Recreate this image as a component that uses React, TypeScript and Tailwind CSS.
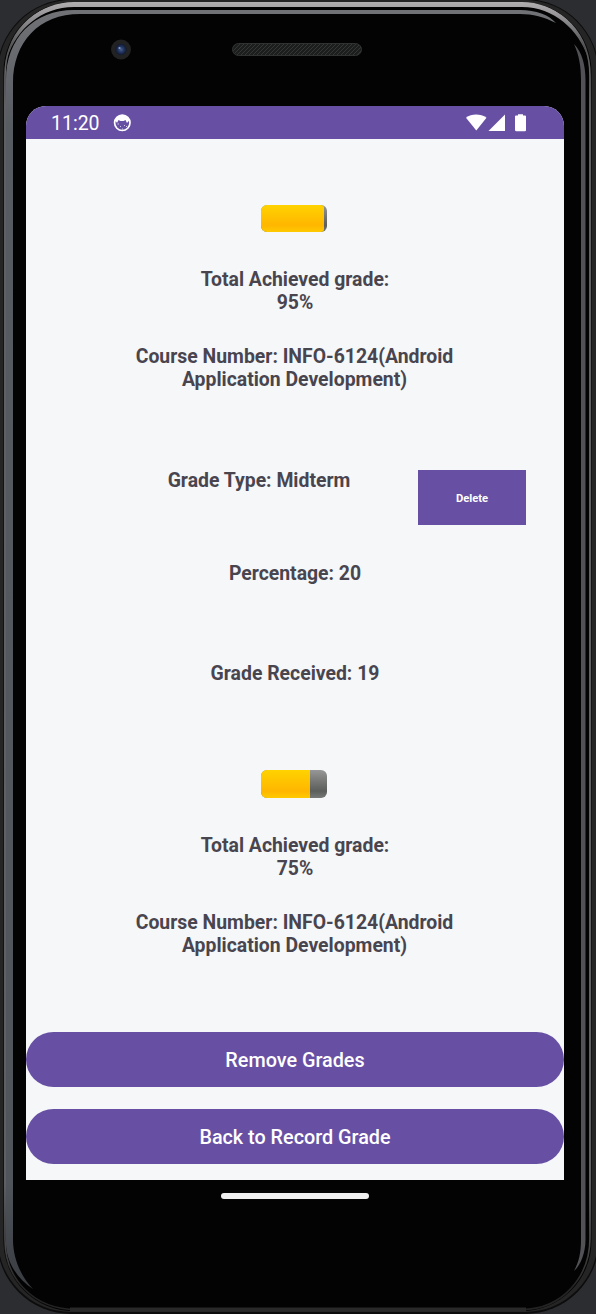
import React from "react";

function PhoneFrame() {
  return (
    <svg className="absolute inset-0 -z-10" width="596" height="1314" viewBox="0 0 596 1314" fill="none">
      <defs>
        <linearGradient id="rim" x1="0" y1="0" x2="0" y2="1314" gradientUnits="userSpaceOnUse">
          <stop offset="0" stopColor="#b5b2b4" />
          <stop offset="0.01" stopColor="#9b999b" />
          <stop offset="0.035" stopColor="#555557" />
          <stop offset="0.08" stopColor="#777779" />
          <stop offset="0.9" stopColor="#77777a" />
          <stop offset="0.95" stopColor="#444445" />
          <stop offset="0.98" stopColor="#242424" />
        </linearGradient>
        <linearGradient id="slate" x1="0" y1="0" x2="0" y2="1314" gradientUnits="userSpaceOnUse">
          <stop offset="0" stopColor="#737478" />
          <stop offset="0.1" stopColor="#575b62" />
          <stop offset="0.9" stopColor="#50555c" />
          <stop offset="1" stopColor="#33363a" />
        </linearGradient>
        <radialGradient id="lens">
          <stop offset="0" stopColor="#4a6090" />
          <stop offset="0.5" stopColor="#22345f" />
          <stop offset="1" stopColor="#10182c" />
        </radialGradient>
        <pattern id="mesh" width="4" height="4" patternUnits="userSpaceOnUse">
          <rect width="4" height="4" fill="#1c1d1d" />
          <path d="M0 4L4 0" stroke="#353636" />
        </pattern>
      </defs>
      <rect x="-3" y="-1" width="602" height="1315" rx="74" fill="#0c0c0c" />
      <rect x="-2" y="0" width="600" height="1312" rx="73" fill="#252525" />
      <rect x="3.5" y="2" width="588" height="1309" rx="70" fill="#030303" />
      <path d="M5 1240V76C5 34 33 4 74 4H522C562 4 590 34 590 76V1238C590 1277 562 1309.5 522 1309.5H76C35 1309.5 5 1280 5 1240Z" stroke="url(#rim)" strokeWidth="1.6" />
      <path d="M7 58C14 27 39 2 74 2H522C555 2 581 26 588 58C579 30 554 7 522 7H74C41 7 17 29 7 58Z" fill="url(#rim)" />
      <path d="M70 1309.5H526" stroke="#292929" strokeWidth="4" />
      <path d="M6 1243V80C6 38 34 10 74 10H520C536 10 549 15 556 23C544 17 533 14 520 14H80C39 14 13 42 13 83V1240C13 1258 21 1277 33 1289C17 1279 6 1261 6 1243Z" fill="url(#slate)" />
      <path d="M574 44C582 52 585.5 65 585.5 80V1240C585.5 1252 581 1265 574 1271C579 1262 581 1252 581 1240V80C581 66 579 55 574 44Z" fill="#525256" />
      <circle cx="121" cy="49.5" r="10" fill="#222222" />
      <circle cx="121" cy="49.5" r="5.7" fill="url(#lens)" />
      <circle cx="119.5" cy="48" r="1.1" fill="#8b9fbf" />
      <rect x="232.5" y="43.5" width="129" height="12" rx="6" fill="url(#mesh)" stroke="#303131" />
    </svg>
  );
}

function StatusBar() {
  return (
    <header className="flex h-[33px] shrink-0 items-center bg-[#6750a4] pl-[25px] pr-[36px] text-white">
      <span className="w-[62px] pt-[3px] text-[19.5px] leading-none">11:20</span>
      <svg className="h-[18px] w-[18px]" viewBox="0 0 18 18" fill="none">
        <circle cx="9.3" cy="8.8" r="7.7" stroke="white" strokeWidth="1.7" />
        <path d="M2 6C4 0 14 0 16.5 6L14 9L12.5 6L10.5 7H7.5L5.5 6L4 9Z" fill="white" />
        <path d="M4.5 10H6M7 12.5H8M11 11.5H12M9 15H10M13 13L14 12" stroke="white" strokeOpacity=".7" strokeWidth="1" />
      </svg>
      <svg className="ml-auto h-[20px] w-[62px]" viewBox="0 0 62 20" fill="white">
        <path d="M0 4.7C5.5.3 14.5.3 20.5 4.7L10.3 17.5Z" />
        <path d="M22.5 18L39 1.5V18Z" />
        <path d="M50 2.5H52V1.2H57V2.5H59Q60 2.5 60 3.5V17Q60 18.2 59 18.2H50.5Q49 18.2 49 17V3.5Q49 2.5 50 2.5Z" />
      </svg>
    </header>
  );
}

function GradeSummary({ grade, full }: { grade: number; full: boolean }) {
  return (
    <section className="flex flex-col items-center">
      <div className={`mr-[2px] flex w-[66px] overflow-hidden rounded-[6px] bg-linear-to-b from-[#969796] from-0% via-[#5c5e5b] via-75% to-[#777977] ${full ? "h-[27px]" : "h-[28px]"}`}>
        <div className={full ? "h-full w-[63px] rounded-r-[3px] bg-linear-to-b from-[#ffd300] from-0% via-[#ffb600] via-75% to-[#ffca00]" : "h-full w-[49px] bg-linear-to-b from-[#ffd300] from-0% via-[#ffb600] via-75% to-[#ffca00]"} />
      </div>
      <p className="mt-[36px]">Total Achieved grade:<br />{grade}%</p>
      <p className="mt-[31px] pr-px">Course Number: INFO-6124(Android<br />Application Development)</p>
    </section>
  );
}

export default function App() {
  return (
    <div className="relative isolate flex h-[1314px] w-[596px] flex-col overflow-hidden bg-[#2c2d31] pl-[26px] pt-[106px] font-['Roboto',sans-serif]">
      <PhoneFrame />
      <div className="flex h-[1074px] w-[538px] flex-col overflow-hidden rounded-t-[20px] bg-[#f5f7f9]">
        <StatusBar />
        <main className="flex flex-1 flex-col pt-[66px] text-center text-[19.4px] font-bold leading-[23px] text-[#49454f]">
          <GradeSummary grade={95} full />
          <section className="mt-[79px] flex flex-col items-center">
            <div className="flex h-[55px] w-full pl-[74px]">
              <h2 className="-mt-px w-[318px]">Grade Type: Midterm</h2>
              <button className="h-[55px] w-[108px] bg-[#6750a4] pt-[2px] text-[11.2px] font-bold leading-none text-white">Delete</button>
            </div>
            <p className="mt-[37px]">Percentage: 20</p>
            <p className="mt-[77px]">Grade Received: 19</p>
          </section>
          <div className="mt-[85px]"><GradeSummary grade={75} full={false} /></div>
          <footer className="mt-auto flex flex-col gap-[22px] pb-[16px] text-[19.8px] font-medium text-white">
            <button className="h-[55px] rounded-full bg-[#6750a4] pt-[2px]">Remove Grades</button>
            <button className="h-[55px] rounded-full bg-[#6750a4] pt-[2px]">Back to Record Grade</button>
          </footer>
        </main>
      </div>
      <div className="ml-[195px] mt-[13px] h-[6px] w-[148px] rounded-full bg-[#f0f0f0]" />
    </div>
  );
}
